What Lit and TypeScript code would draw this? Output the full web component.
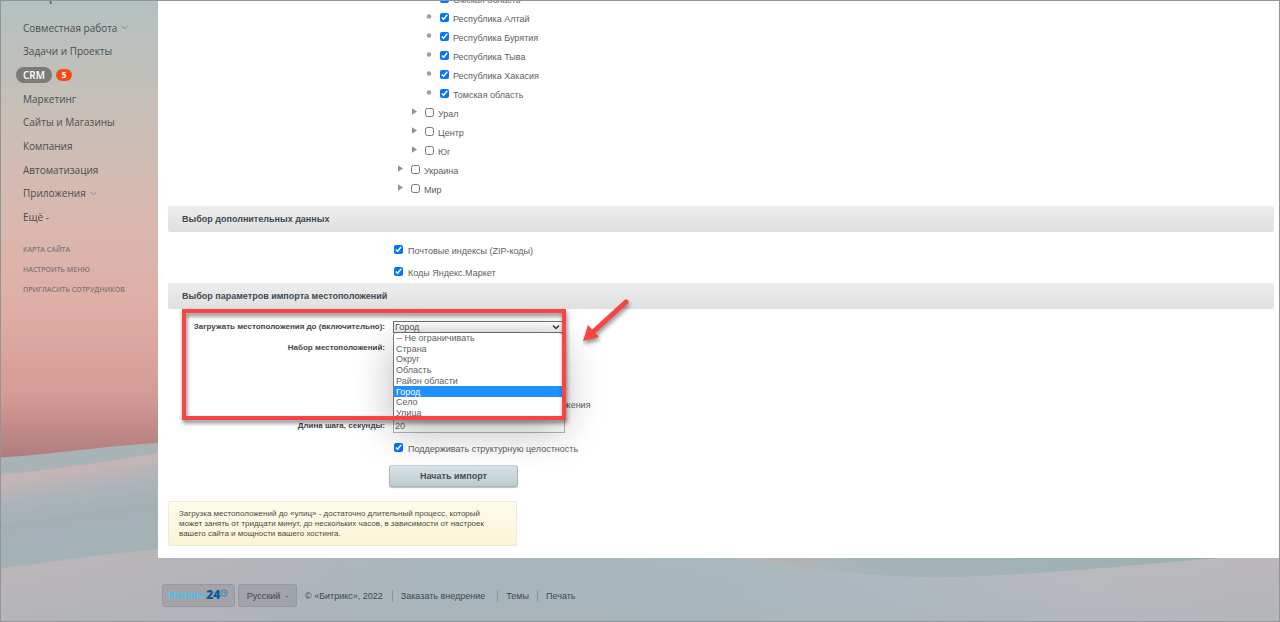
import { LitElement, html, css, svg, nothing } from "lit";
import { customElement, state } from "lit/decorators.js";
import { classMap } from "lit/directives/class-map.js";

type TreeRow = { name: string; level: 1 | 2 | 3; checked: boolean };

const TREE: TreeRow[] = [
  { name: "Омская область", level: 3, checked: true },
  { name: "Республика Алтай", level: 3, checked: true },
  { name: "Республика Бурятия", level: 3, checked: true },
  { name: "Республика Тыва", level: 3, checked: true },
  { name: "Республика Хакасия", level: 3, checked: true },
  { name: "Томская область", level: 3, checked: true },
  { name: "Урал", level: 2, checked: false },
  { name: "Центр", level: 2, checked: false },
  { name: "Юг", level: 2, checked: false },
  { name: "Украина", level: 1, checked: false },
  { name: "Мир", level: 1, checked: false },
];

const MENU = [
  { name: "Совместная работа", more: true },
  { name: "Задачи и Проекты" },
  { name: "CRM", active: true, count: 5 },
  { name: "Маркетинг" },
  { name: "Сайты и Магазины" },
  { name: "Компания" },
  { name: "Автоматизация" },
  { name: "Приложения", more: true },
  { name: "Ещё -" },
];

const DEPTHS = [
  "-- Не ограничивать",
  "Страна",
  "Округ",
  "Область",
  "Район области",
  "Город",
  "Село",
  "Улица",
];

/** Desert wallpaper behind the whole page. */
@customElement("dune-backdrop")
export class DuneBackdrop extends LitElement {
  static styles = css`
    :host {
      position: absolute;
      inset: 0;
      z-index: -1;
    }
    .scene {
      display: block;
      width: 100%;
      height: 100%;
    }
  `;

  render() {
    return html`<svg class="scene" viewBox="0 0 1280 622" preserveAspectRatio="none" aria-hidden="true">
      ${svg`
      <defs>
        <linearGradient id="sky" x1="0" y1="0" x2="0" y2="460" gradientUnits="userSpaceOnUse">
          <stop offset="0" stop-color="#b4c1c0"/>
          <stop offset=".14" stop-color="#bfc0bb"/>
          <stop offset=".33" stop-color="#cfbdb5"/>
          <stop offset=".5" stop-color="#dab7ad"/>
          <stop offset=".68" stop-color="#dfada5"/>
          <stop offset=".86" stop-color="#d39b95"/>
          <stop offset="1" stop-color="#b07b7c"/>
        </linearGradient>
        <linearGradient id="ridge" x1="76" y1="463" x2="90" y2="560" gradientUnits="userSpaceOnUse">
          <stop offset="0" stop-color="#ccb3b4"/>
          <stop offset=".1" stop-color="#c2b4b7"/>
          <stop offset=".3" stop-color="#acb4b8"/>
          <stop offset=".55" stop-color="#a4afb4"/>
          <stop offset="1" stop-color="#a3b2b6"/>
        </linearGradient>
        <linearGradient id="front" x1="0" y1="0" x2="1280" y2="0" gradientUnits="userSpaceOnUse">
          <stop offset="0" stop-color="#bdb6ba"/>
          <stop offset=".17" stop-color="#b6b5b9"/>
          <stop offset=".33" stop-color="#a9b6bb"/>
          <stop offset=".55" stop-color="#a9b8be"/>
          <stop offset=".7" stop-color="#b0b9bf"/>
          <stop offset=".85" stop-color="#bababe"/>
          <stop offset="1" stop-color="#bbb7bb"/>
        </linearGradient>
        <linearGradient id="hollow" x1="740" y1="0" x2="1240" y2="0" gradientUnits="userSpaceOnUse">
          <stop offset="0" stop-color="#b9b4b7"/>
          <stop offset=".25" stop-color="#a6b4b7"/>
          <stop offset="1" stop-color="#9aafb1"/>
        </linearGradient>
        <linearGradient id="shade" x1="0" y1="560" x2="0" y2="622" gradientUnits="userSpaceOnUse">
          <stop offset="0" stop-color="#a5b3b8" stop-opacity="0"/>
          <stop offset="1" stop-color="#a5b3b8" stop-opacity=".35"/>
        </linearGradient>
      </defs>
      <rect width="1280" height="480" fill="url(#sky)"/>
      <path d="M0 458C50 455 90 448 160 443V560H0Z" fill="#a8b3b8"/>
      <path d="M0 475C50 471 110 462 160 453V570H0Z" fill="url(#ridge)"/>
      <path d="M0 569C60 562 100 554 160 550L1280 550V622H0Z" fill="url(#front)"/>
      <path d="M0 569C60 562 100 554 160 550H1280V622H0Z" fill="url(#shade)"/>
      <path d="M720 557C790 566 860 578 935 578C1030 577 1120 567 1240 557Z" fill="url(#hollow)"/>
      `}
    </svg>`;
  }
}

@customElement("side-menu")
export class SideMenu extends LitElement {
  static styles = css`
    :host {
      display: block;
      padding-left: 15px;
      font-family: "Open Sans", sans-serif;
      color: #4b4e50;
    }
    a {
      color: inherit;
      text-decoration: none;
    }
    .brand {
      display: block;
      height: 15px;
      margin: -14px 0 0 7px;
      padding-bottom: 14px;
      font-size: 15px;
      line-height: 15px;
    }
    ul {
      margin: 0;
      padding: 0;
      list-style: none;
    }
    .main {
      display: grid;
      grid-auto-rows: 1fr;
      height: 213px;
    }
    .main li {
      display: flex;
      align-items: center;
      gap: 4px;
      font-size: 10px;
      line-height: 16px;
    }
    .item {
      padding: 0 7px;
      white-space: nowrap;
    }
    .item.on {
      border-radius: 8px;
      background: #7b7a77;
      color: #fff;
      font-weight: 600;
    }
    .more {
      width: 7px;
      height: 5px;
      margin-left: -7px;
    }
    .count {
      width: 16px;
      border-radius: 6px;
      background: #fa4a15;
      color: #fff;
      font-size: 8px;
      font-weight: 700;
      line-height: 12px;
      text-align: center;
    }
    .extra {
      display: grid;
      margin: 11px 0 0 7px;
      color: #7d7577;
      font-size: 7px;
      font-weight: 600;
      line-height: 20px;
      text-transform: uppercase;
    }
  `;

  render() {
    return html`
      <a class="brand" href="#">Битрикс24</a>
      <nav>
        <ul class="main">
          ${MENU.map(
            (m) => html`<li>
              <a href="#" class=${classMap({ item: true, on: !!m.active })}>${m.name}</a>
              ${m.more
                ? html`<svg class="more" viewBox="0 0 7 5"><path d="M.5 .8L3.500 3.800L6.500 .8" fill="none" stroke="#8b8886"/></svg>`
                : nothing}
              ${m.count ? html`<span class="count">${m.count}</span>` : nothing}
            </li>`
          )}
        </ul>
        <ul class="extra">
          <li><a href="#">Карта сайта</a></li>
          <li><a href="#">Настроить меню</a></li>
          <li><a href="#">Пригласить сотрудников</a></li>
        </ul>
      </nav>
    `;
  }
}

@customElement("location-tree")
export class LocationTree extends LitElement {
  static styles = css`
    :host {
      display: block;
      padding-left: 229px;
    }
    ul {
      margin: 0;
      padding: 0;
      list-style: none;
    }
    li {
      display: flex;
      align-items: center;
      height: 19px;
    }
    .l2 {
      padding-left: 14px;
    }
    .l3 {
      padding-left: 29px;
    }
    .mark {
      display: flex;
      width: 14px;
      margin: 0 0 5px;
      padding: 0;
      border: 0;
      background: none;
    }
    .mark svg {
      width: 6px;
      height: 7px;
    }
    label {
      display: flex;
      align-items: center;
      gap: 4px;
    }
    input {
      width: 9px;
      height: 9px;
      margin: 0 0 2px;
      accent-color: #0075ff;
    }
  `;

  render() {
    return html`<ul>
      ${TREE.map(
        (r) => html`<li class="l${r.level}">
          ${r.level === 3
            ? html`<span class="mark"><svg viewBox="0 0 6 7"><circle cx="3" cy="3.500" r="2.300" fill="#97a0ab"/></svg></span>`
            : html`<button class="mark" aria-label="Развернуть">
                <svg viewBox="0 0 6 7"><path d="M1 .3L6 3.500L1 6.700Z" fill="#8793a1"/></svg>
              </button>`}
          <label><input type="checkbox" .checked=${r.checked} />${r.name}</label>
        </li>`
      )}
    </ul>`;
  }
}

@customElement("import-form")
export class ImportForm extends LitElement {
  @state() private depth = 5;

  static styles = css`
    :host {
      display: block;
    }
    h2 {
      margin: 0;
      padding: 0 14px;
      border-radius: 2px;
      background: linear-gradient(#ededed, #e0e0e0);
      color: #3f4b54;
      font-size: 9px;
      font-weight: 700;
      line-height: 26px;
    }
    .check {
      display: flex;
      align-items: center;
      gap: 5px;
      padding-left: 1px;
    }
    .check input {
      width: 9px;
      height: 9px;
      margin: 0 0 3px;
      accent-color: #0075ff;
    }
    .extras {
      display: grid;
      gap: 2px;
      padding: 9px 0 0 225px;
      line-height: 20px;
    }
    .fields {
      position: relative;
      display: grid;
      grid-template-columns: 217px 1fr;
      column-gap: 8px;
      grid-template-rows: 21px 21px 36px 21px 21px 25px;
      align-items: center;
      padding-top: 7px;
    }
    .cap {
      grid-column: 1;
      color: #3f4549;
      font-size: 8px;
      font-weight: 700;
      text-align: right;
      white-space: nowrap;
    }
    .val {
      grid-column: 2;
    }
    .picker {
      position: relative;
      width: 170px;
    }
    .picker select {
      display: block;
      box-sizing: border-box;
      width: 100%;
      height: 12px;
      padding: 0 1px;
      border: 1px solid #6f6f6f;
      border-radius: 0;
      appearance: none;
      background: linear-gradient(#fff, #eee);
      color: #555;
      font: inherit;
      line-height: 10px;
    }
    .chev {
      position: absolute;
      top: 3px;
      right: 3px;
      width: 8px;
      height: 6px;
      pointer-events: none;
    }
    .menu {
      position: absolute;
      z-index: 2;
      top: 100%;
      left: 0;
      right: 0;
      display: grid;
      grid-auto-rows: 1fr;
      height: 86px;
      margin: 0;
      padding: 0;
      border: 1px solid #777;
      border-width: 0 1px;
      border-radius: 3px;
      background: #fff;
      list-style: none;
      box-shadow: 0 12px 40px rgba(0, 0, 0, 0.28);
    }
    .menu li {
      display: flex;
      align-items: center;
      padding: 0 2px;
      line-height: 10px;
    }
    .menu .on {
      background: #1e90ff;
      color: #fff;
    }
    .keep {
      grid-row: 6;
    }
    .old {
      grid-row: 4;
    }
    .pace {
      grid-row: 5;
    }
    .step {
      box-sizing: border-box;
      display: block;
      width: 172px;
      height: 14px;
      padding: 0 1px;
      border: 1px solid #b5b5b5;
      background: transparent;
      color: #666;
      font: inherit;
    }
    .frame {
      position: absolute;
      z-index: 3;
      box-sizing: border-box;
      top: 0;
      left: 14px;
      width: 384px;
      height: 111px;
      border: 4px solid #fb4442;
      filter: drop-shadow(1px 3px 2px rgba(0, 0, 0, 0.5));
      pointer-events: none;
    }
    .arrow {
      position: absolute;
      z-index: 3;
      top: -12px;
      left: 412px;
      width: 52px;
      height: 52px;
      filter: drop-shadow(1px 3px 2px rgba(0, 0, 0, 0.45));
      pointer-events: none;
    }
    .start {
      display: block;
      width: 129px;
      height: 22px;
      margin: 4px 0 0 221px;
      padding: 0;
      border: 1px solid #a9b6bb;
      border-top-color: #c5d0d4;
      border-radius: 3px;
      background: linear-gradient(#dae3e5, #bccbd1);
      box-shadow: 0 1px 1px rgba(0, 0, 0, 0.25);
      color: #484e52;
      font-family: inherit;
      font-size: 9px;
      font-weight: 700;
    }
    .note {
      box-sizing: border-box;
      width: 349px;
      margin: 14px 0 0;
      padding: 7px 16px 6px 10px;
      border: 1px solid #f0ebcd;
      border-radius: 1px;
      background: linear-gradient(#fdfbec, #faf4d6);
      color: #4d4a3f;
      font-size: 8px;
      line-height: 10px;
    }
  `;

  render() {
    return html`
      <h2>Выбор дополнительных данных</h2>
      <div class="extras">
        <label class="check"><input type="checkbox" checked />Почтовые индексы (ZIP-коды)</label>
        <label class="check"><input type="checkbox" checked />Коды Яндекс.Маркет</label>
      </div>
      <h2>Выбор параметров импорта местоположений</h2>
      <div class="fields">
        <label class="cap" for="depth">Загружать местоположения до (включительно):</label>
        <div class="val picker">
          <select id="depth" .selectedIndex=${this.depth}>
            ${DEPTHS.map((d, i) => html`<option ?selected=${i === this.depth}>${d}</option>`)}
          </select>
          <svg class="chev" viewBox="0 0 8 6"><path d="M1 1.500L4 4.500L7 1.500" fill="none" stroke="#333" stroke-width="1.500"/></svg>
          <ul class="menu" role="listbox">
            ${DEPTHS.map(
              (d, i) => html`<li
                role="option"
                aria-selected=${i === this.depth}
                class=${classMap({ on: i === this.depth })}
                @click=${() => (this.depth = i)}
              >${d}</li>`
            )}
          </ul>
        </div>
        <span class="cap">Набор местоположений:</span>
        <label class="val check old"><input type="checkbox" />Удалить ранее созданные местоположения</label>
        <label class="cap pace" for="step">Длина шага, секунды:</label>
        <input class="val step pace" id="step" type="text" value="20" />
        <label class="val check keep"><input type="checkbox" checked />Поддерживать структурную целостность</label>
        <div class="frame"></div>
        <svg class="arrow" viewBox="0 0 52 52">
          <path d="M46 5L13 35" stroke="#fb4442" stroke-width="5" stroke-linecap="round"/>
          <path d="M3 44L8 28L19 40Z" fill="#fb4442"/>
        </svg>
      </div>
      <button class="start">Начать импорт</button>
      <p class="note">
        Загрузка местоположений до «улиц» - достаточно длительный процесс, который может занять от
        тридцати минут, до нескольких часов, в зависимости от настроек вашего сайта и мощности вашего
        хостинга.
      </p>
    `;
  }
}

@customElement("page-footer")
export class PageFooter extends LitElement {
  static styles = css`
    :host {
      display: flex;
      align-items: center;
      padding: 26px 4px 14px;
      color: #41484d;
      line-height: 12px;
      white-space: nowrap;
    }
    a {
      color: inherit;
      text-decoration: none;
    }
    .chip {
      display: flex;
      align-items: center;
      justify-content: center;
      box-sizing: border-box;
      height: 23px;
      padding: 0 5px 2px;
      border: 1px solid rgba(90, 90, 100, 0.15);
      border-radius: 3px;
      background: rgba(125, 125, 135, 0.3);
      color: inherit;
      font: inherit;
    }
    .logo {
      width: 73px;
      font-family: "Open Sans", sans-serif;
      font-weight: 600;
      color: #30cbfb;
    }
    .logo b {
      color: #0a5f9e;
      font-size: 12px;
    }
    .clock {
      flex: none;
      width: 8px;
      height: 8px;
      margin-bottom: 4px;
    }
    .lang {
      width: 59px;
      margin: 0 8px 0 3px;
      padding-bottom: 0;
    }
    .links {
      display: flex;
      margin-left: 9px;
    }
    .links a {
      padding: 0 8px;
      border-left: 1px solid #8b959b;
    }
    .links a:first-child {
      padding-right: 12px;
    }
  `;

  render() {
    return html`
      <a class="chip logo" href="#">Битрикс<b>24</b><svg class="clock" viewBox="0 0 7 7"><circle cx="3.500" cy="3.500" r="2.800" fill="none" stroke="#2a7fb5" stroke-width=".8"/><path d="M3.500 2V3.700H5" fill="none" stroke="#2a7fb5" stroke-width=".8"/></svg></a>
      <button class="chip lang">Русский&nbsp; -</button>
      <span>© «Битрикс», 2022</span>
      <nav class="links">
        <a href="#">Заказать внедрение</a>
        <a href="#">Темы</a>
        <a href="#">Печать</a>
      </nav>
    `;
  }
}

@customElement("app-root")
export class AppRoot extends LitElement {
  static styles = css`
    :host {
      position: relative;
      isolation: isolate;
      box-sizing: border-box;
      display: grid;
      grid-template-columns: 157px minmax(0, 1fr);
      height: 100vh;
      overflow: hidden;
      border: 1px solid #929597;
      color: #5a5f63;
      font-family: "Liberation Sans", Arial, sans-serif;
      font-size: 9px;
      line-height: 12px;
    }
    .column {
      display: flex;
      flex-direction: column;
    }
    .sheet {
      padding: 0 5px 12px 10px;
      background: #fff;
    }
    .tree {
      margin: -11px 0 7px;
    }
  `;

  render() {
    return html`
      <dune-backdrop></dune-backdrop>
      <side-menu></side-menu>
      <div class="column">
        <main class="sheet">
          <location-tree class="tree"></location-tree>
          <import-form></import-form>
        </main>
        <page-footer></page-footer>
      </div>
    `;
  }
}
